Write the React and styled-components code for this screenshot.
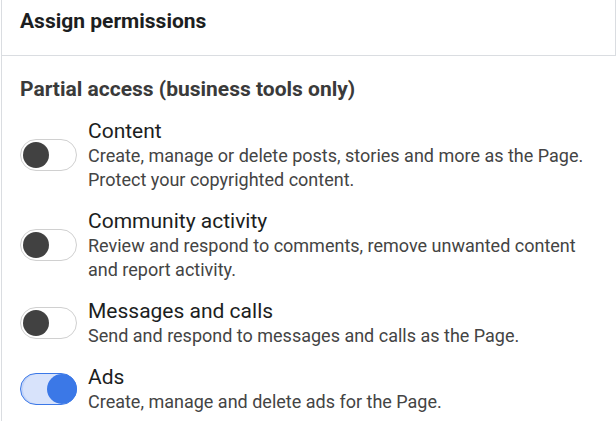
import React from "react";
import styled, { createGlobalStyle } from "styled-components";

const Global = createGlobalStyle`
  html, body { margin: 0; padding: 0; background: #fff; }
  body { font-family: Roboto, "Liberation Sans", Arial, sans-serif; -webkit-font-smoothing: antialiased; }
`;

const Page = styled.div`
  margin-left: 1px;
  width: 615px;
  height: 421px;
  overflow: hidden;
  display: flex;
  flex-direction: column;
`;

const Header = styled.div`
  box-sizing: border-box;
  height: 56px;
  padding: 9px 18px 0;
  border-left: 1px solid #dadde1;
  border-right: 1px solid #dadde1;
  border-bottom: 1px solid #dadde1;
`;

const HeaderTitle = styled.h2`
  margin: 0;
  font-size: 21px;
  line-height: 24px;
  font-weight: 700;
  color: #1c1e21;
`;

const Body = styled.div`
  flex: 1;
  border-left: 1px solid #dadde1;
  padding: 20px 18px 0;
  display: flex;
  flex-direction: column;
`;

const Section = styled.h3`
  margin: 0 0 16px;
  font-size: 21px;
  line-height: 26px;
  font-weight: 700;
  color: #3a3a3a;
`;

const List = styled.div`
  display: flex;
  flex-direction: column;
  gap: 16px;
`;

const Row = styled.div`
  display: flex;
  align-items: center;
  gap: 11px;
`;

const Track = styled.div`
  box-sizing: border-box;
  flex: none;
  width: 57px;
  height: 32px;
  border-radius: 16px;
  border: 1px solid ${(p) => (p.$on ? "#3b78e7" : "#d0d0d0")};
  background: ${(p) => (p.$on ? "#d8e3fb" : "#fff")};
  box-shadow: ${(p) => (p.$on ? "inset 2px 0 0 #c2d3f7" : "none")};
  display: flex;
  align-items: center;
  justify-content: ${(p) => (p.$on ? "flex-end" : "flex-start")};
  padding: ${(p) => (p.$on ? "0" : "0 2px")};
`;

const Knob = styled.div`
  width: ${(p) => (p.$on ? "30px" : "26px")};
  height: ${(p) => (p.$on ? "30px" : "26px")};
  border-radius: 50%;
  background: ${(p) => (p.$on ? "#3b78e7" : "#414141")};
  margin-right: ${(p) => (p.$on ? "-1px" : "0")};
`;

const Text = styled.div`
  display: flex;
  flex-direction: column;
  white-space: nowrap;
`;

const Title = styled.div`
  font-size: 21px;
  line-height: 26px;
  color: #1c1e21;
`;

const Desc = styled.div`
  font-size: 18px;
  line-height: 24px;
  color: #444444;
`;

const items = [
  {
    title: "Content",
    desc: ["Create, manage or delete posts, stories and more as the Page.", "Protect your copyrighted content."],
    on: false,
  },
  {
    title: "Community activity",
    desc: ["Review and respond to comments, remove unwanted content", "and report activity."],
    on: false,
  },
  {
    title: "Messages and calls",
    desc: ["Send and respond to messages and calls as the Page."],
    on: false,
  },
  {
    title: "Ads",
    desc: ["Create, manage and delete ads for the Page."],
    on: true,
  },
];

export default function App() {
  return (
    <>
      <Global />
      <Page>
        <Header>
          <HeaderTitle>Assign permissions</HeaderTitle>
        </Header>
        <Body>
          <Section>Partial access (business tools only)</Section>
          <List>
            {items.map((it) => (
              <Row key={it.title}>
                <Track $on={it.on}>
                  <Knob $on={it.on} />
                </Track>
                <Text>
                  <Title>{it.title}</Title>
                  {it.desc.map((d) => (
                    <Desc key={d}>{d}</Desc>
                  ))}
                </Text>
              </Row>
            ))}
          </List>
        </Body>
      </Page>
    </>
  );
}
